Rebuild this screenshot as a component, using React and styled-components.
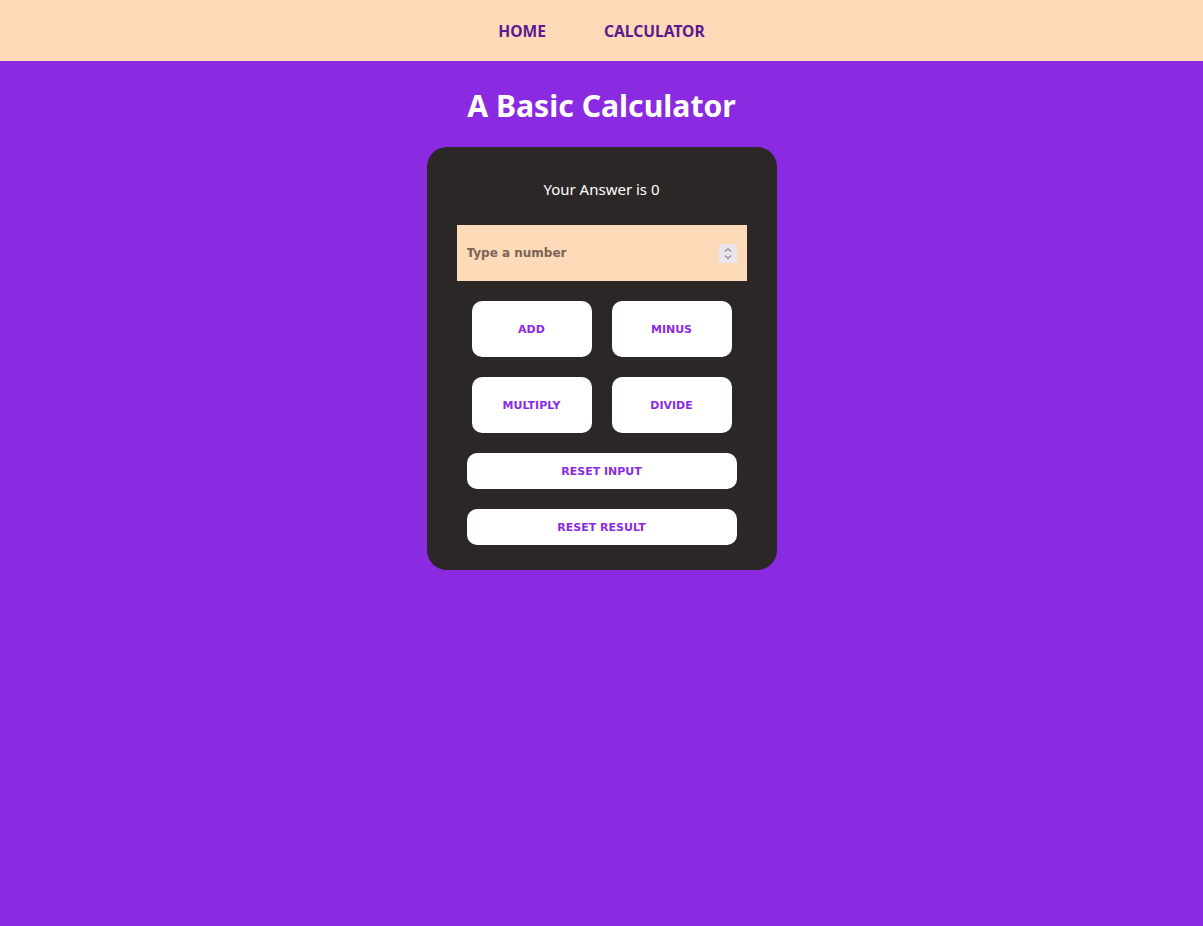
import React, { useState } from "react";
import styled, { createGlobalStyle } from "styled-components";

const GlobalStyle = createGlobalStyle`
  body {
    margin: 0;
    background: #8a2be2;
    font-family: "Noto Sans", sans-serif;
  }
`;

const NavBar = styled.nav`
  height: 61px;
  padding-top: 1px;
  box-sizing: border-box;
  background: #ffdab9;
  display: flex;
  justify-content: center;
  align-items: center;
  gap: 58px;
`;

const NavLink = styled.a`
  color: #5b1a8f;
  font-family: "Noto Sans", sans-serif;
  font-weight: 700;
  font-size: 15.6px;
  text-decoration: none;
  cursor: pointer;
`;

const Page = styled.main`
  display: flex;
  flex-direction: column;
  align-items: center;
`;

const Title = styled.h1`
  margin: 24px 0 20px;
  color: #fff;
  font-family: "Noto Sans", sans-serif;
  font-size: 30.2px;
  font-weight: 700;
  line-height: 42px;
`;

const Card = styled.div`
  width: 350px;
  box-sizing: border-box;
  background: #2b2727;
  border-radius: 20px;
  padding: 30px 30px 15px;
  display: flex;
  flex-direction: column;
  align-items: center;
`;

const Answer = styled.p`
  margin: 0 0 24px;
  color: #fff;
  font-family: "Noto Sans", sans-serif;
  font-size: 15px;
  line-height: 24px;
`;

const InputBox = styled.div`
  width: 290px;
  height: 56px;
  background: #ffdab9;
  display: flex;
  align-items: center;
  padding: 0 10px;
  box-sizing: border-box;
  margin-bottom: 10px;
`;

const NumberInput = styled.input`
  flex: 1;
  border: none;
  outline: none;
  background: transparent;
  font-family: "DejaVu Sans", Verdana, sans-serif;
  font-weight: 700;
  font-size: 12px;
  color: #333;
  padding: 0;
  &::placeholder {
    color: #7a6454;
  }
  &::-webkit-inner-spin-button,
  &::-webkit-outer-spin-button {
    -webkit-appearance: none;
    margin: 0;
  }
`;

const Spinner = styled.div`
  width: 18px;
  height: 19px;
  background: #e9e5ea;
  display: flex;
  align-items: center;
  justify-content: center;
`;

const ButtonRow = styled.div`
  display: flex;
`;

const OpButton = styled.button`
  width: ${(p) => (p.$wide ? "270px" : "120px")};
  height: ${(p) => (p.$wide ? "36px" : "56px")};
  margin: 10px;
  border: none;
  border-radius: 10px;
  background: #fff;
  color: #8a2be2;
  font-family: "DejaVu Sans", Verdana, sans-serif;
  font-weight: 700;
  font-size: 11px;
  cursor: pointer;
`;

const App = () => {
  const [value, setValue] = useState("");
  const [result, setResult] = useState(0);
  const n = Number(value) || 0;

  return (
    <>
      <GlobalStyle />
      <NavBar>
        <NavLink>HOME</NavLink>
        <NavLink>CALCULATOR</NavLink>
      </NavBar>
      <Page>
        <Title>A Basic Calculator</Title>
        <Card>
          <Answer>Your Answer is {result}</Answer>
          <InputBox>
            <NumberInput
              type="number"
              placeholder="Type a number"
              value={value}
              onChange={(e) => setValue(e.target.value)}
            />
            <Spinner>
              <svg width="10" height="13" viewBox="0 0 10 13" fill="none" stroke="#8d8996" strokeWidth="1.2">
                <path d="M2 4.5 L5 1.8 L8 4.5" />
                <path d="M2 8.5 L5 11.2 L8 8.5" />
              </svg>
            </Spinner>
          </InputBox>
          <div>
            <ButtonRow>
              <OpButton onClick={() => setResult(result + n)}>ADD</OpButton>
              <OpButton onClick={() => setResult(result - n)}>MINUS</OpButton>
            </ButtonRow>
            <ButtonRow>
              <OpButton onClick={() => setResult(result * n)}>MULTIPLY</OpButton>
              <OpButton onClick={() => setResult(n ? result / n : result)}>DIVIDE</OpButton>
            </ButtonRow>
          </div>
          <OpButton $wide onClick={() => setValue("")}>RESET INPUT</OpButton>
          <OpButton $wide onClick={() => setResult(0)}>RESET RESULT</OpButton>
        </Card>
      </Page>
    </>
  );
};

export default App;
